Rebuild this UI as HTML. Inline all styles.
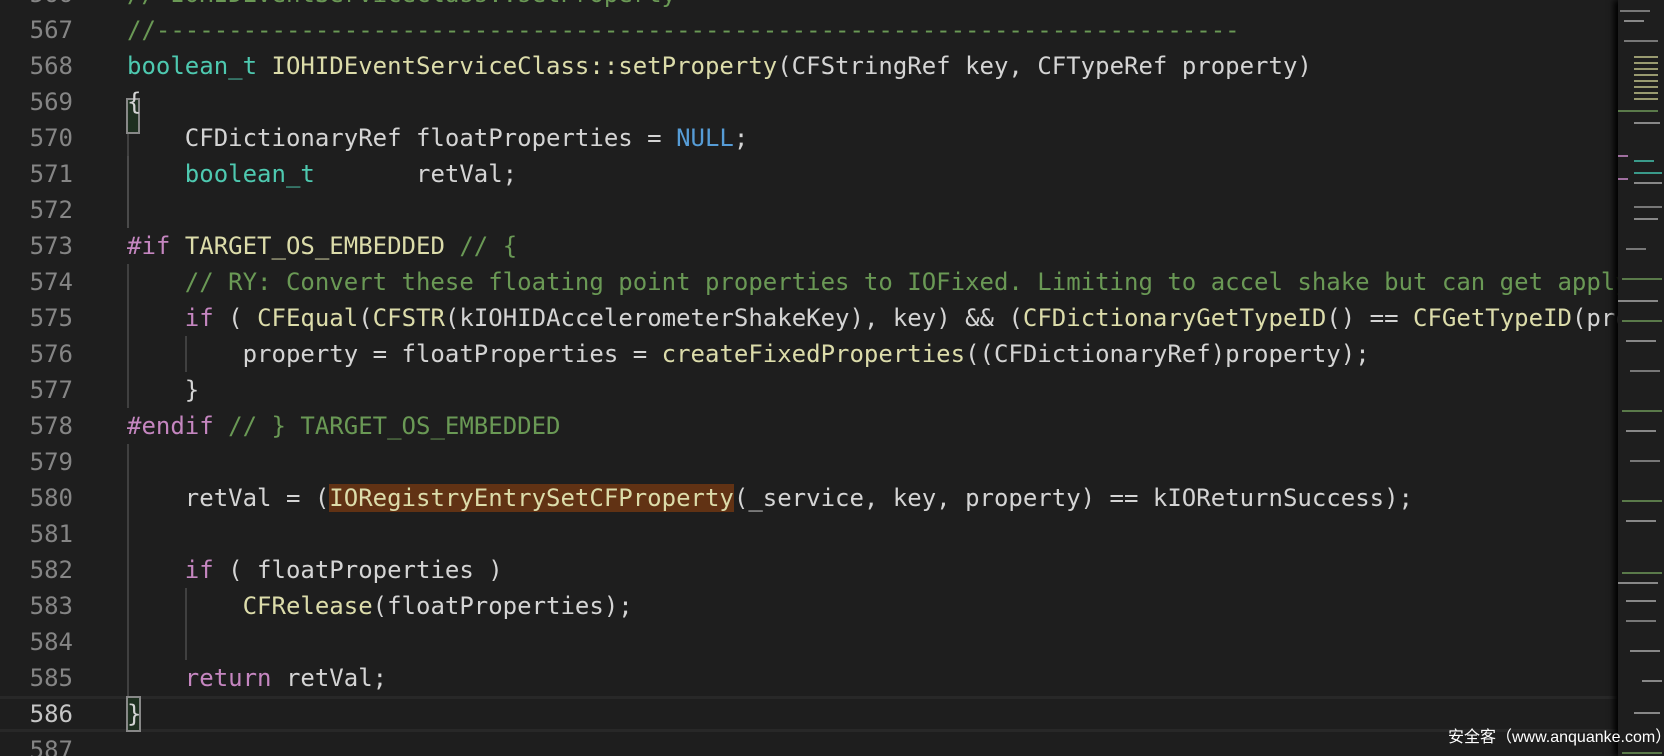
<!DOCTYPE html>
<html><head><meta charset="utf-8"><style>
html,body{margin:0;padding:0;background:#1e1e1e;width:1664px;height:756px;overflow:hidden}
.ed{position:absolute;left:0;top:0;width:1618px;height:756px;overflow:hidden}
.ln{position:absolute;left:0;width:73px;text-align:right;color:#858585;font:24px/36px "DejaVu Sans Mono","Liberation Mono",monospace}
.cd{position:absolute;left:127px;white-space:pre;color:#d4d4d4;font:24px/36px "DejaVu Sans Mono","Liberation Mono",monospace}
.k{color:#c586c0}.t{color:#4ec9b0}.f{color:#dcdcaa}.c{color:#6a9955}.b{color:#569cd6}
.hl{background:#613214}
.g{position:absolute;width:2px;background:#404040}
.mm{position:absolute;left:1618px;top:0;width:46px;height:756px;background:#1e1e1e;box-shadow:-4px 0 6px #000}
.mm i{position:absolute;height:2px;display:block}
.wm{position:absolute;left:1448px;top:726px;color:#fff;font:16px/24px "Liberation Sans","Noto Sans CJK SC",sans-serif;white-space:pre}
</style></head><body>
<div class="ed">
<div style="position:absolute;left:0;top:696px;width:1618px;height:36px;box-sizing:border-box;border-top:3px solid #282828;border-bottom:3px solid #282828"></div>
<div class="g" style="left:127px;top:120px;height:36px"></div>
<div class="g" style="left:127px;top:156px;height:72px;background:#4a4a4a"></div>
<div class="g" style="left:127px;top:264px;height:144px"></div>
<div class="g" style="left:185px;top:336px;height:36px"></div>
<div class="g" style="left:127px;top:444px;height:252px"></div>
<div class="g" style="left:185px;top:588px;height:72px"></div>
<div style="position:absolute;left:126px;top:98px;width:14px;height:36px;border:2px solid #888;box-sizing:border-box;background:#1e3020"></div>
<div style="position:absolute;left:126px;top:696px;width:15px;height:36px;border:2px solid #888;box-sizing:border-box;background:#1e3020"></div>
<div class="ln" style="top:-24px">566<br>567<br>568<br>569<br>570<br>571<br>572<br>573<br>574<br>575<br>576<br>577<br>578<br>579<br>580<br>581<br>582<br>583<br>584<br>585<br><span style="color:#c6c6c6">586</span><br>587</div>
<div class="cd" style="top:-24px"><span class="c">// IOHIDEventServiceClass::setProperty</span>
<span class="c">//---------------------------------------------------------------------------</span>
<span class="t">boolean_t</span> <span class="f">IOHIDEventServiceClass::setProperty</span>(CFStringRef key, CFTypeRef property)
{
    CFDictionaryRef floatProperties = <span class="b">NULL</span>;
    <span class="t">boolean_t</span>       retVal;

<span class="k">#if</span> <span class="f">TARGET_OS_EMBEDDED</span> <span class="c">// {</span>
    <span class="c">// RY: Convert these floating point properties to IOFixed. Limiting to accel shake but can get applyed to others as well</span>
    <span class="k">if</span> ( <span class="f">CFEqual</span>(<span class="f">CFSTR</span>(kIOHIDAccelerometerShakeKey), key) &amp;&amp; (<span class="f">CFDictionaryGetTypeID</span>() == <span class="f">CFGetTypeID</span>(property)) )
        property = floatProperties = <span class="f">createFixedProperties</span>((CFDictionaryRef)property);
    }
<span class="k">#endif</span> <span class="c">// } TARGET_OS_EMBEDDED</span>

    retVal = (<span class="f hl">IORegistryEntrySetCFProperty</span>(_service, key, property) == kIOReturnSuccess);

    <span class="k">if</span> ( floatProperties )
        <span class="f">CFRelease</span>(floatProperties);

    <span class="k">return</span> retVal;
}
</div>
</div>
<div class="mm">
<i style="left:2px;top:10px;width:30px;background:#777"></i>
<i style="left:6px;top:20px;width:20px;background:#888"></i>
<i style="left:6px;top:40px;width:34px;background:#777"></i>
<i style="left:16px;top:56px;width:24px;background:#999a70"></i>
<i style="left:16px;top:62px;width:24px;background:#999a70"></i>
<i style="left:16px;top:68px;width:24px;background:#999a70"></i>
<i style="left:16px;top:74px;width:24px;background:#999a70"></i>
<i style="left:16px;top:80px;width:24px;background:#999a70"></i>
<i style="left:16px;top:86px;width:24px;background:#999a70"></i>
<i style="left:16px;top:92px;width:24px;background:#999a70"></i>
<i style="left:16px;top:98px;width:24px;background:#999a70"></i>
<i style="left:0;top:110px;width:40px;background:#5a7a4a"></i>
<i style="left:16px;top:122px;width:26px;background:#888"></i>
<i style="left:0;top:155px;width:10px;background:#a070a0"></i>
<i style="left:16px;top:160px;width:20px;background:#3a9a8a"></i>
<i style="left:16px;top:172px;width:28px;background:#3a9a8a"></i>
<i style="left:0;top:178px;width:10px;background:#a070a0"></i>
<i style="left:16px;top:182px;width:28px;background:#888"></i>
<i style="left:16px;top:206px;width:28px;background:#777"></i>
<i style="left:16px;top:218px;width:24px;background:#888"></i>
<i style="left:8px;top:248px;width:20px;background:#777"></i>
<i style="left:4px;top:278px;width:40px;background:#5a7a4a"></i>
<i style="left:0;top:300px;width:40px;background:#888"></i>
<i style="left:4px;top:320px;width:40px;background:#5a7a4a"></i>
<i style="left:8px;top:340px;width:30px;background:#888"></i>
<i style="left:12px;top:370px;width:30px;background:#777"></i>
<i style="left:4px;top:410px;width:40px;background:#5a7a4a"></i>
<i style="left:8px;top:430px;width:30px;background:#888"></i>
<i style="left:12px;top:460px;width:30px;background:#777"></i>
<i style="left:4px;top:500px;width:40px;background:#5a7a4a"></i>
<i style="left:8px;top:520px;width:30px;background:#888"></i>
<i style="left:4px;top:572px;width:40px;background:#5a7a4a"></i>
<i style="left:0;top:582px;width:40px;background:#888"></i>
<i style="left:8px;top:600px;width:30px;background:#888"></i>
<i style="left:8px;top:620px;width:30px;background:#777"></i>
<i style="left:12px;top:650px;width:30px;background:#888"></i>
<i style="left:24px;top:680px;width:20px;background:#888"></i>
<i style="left:16px;top:712px;width:26px;background:#888"></i>
<i style="left:4px;top:752px;width:40px;background:#5a7a4a"></i>
</div>
<div class="wm">安全客（www.anquanke.com）</div>
</body></html>
